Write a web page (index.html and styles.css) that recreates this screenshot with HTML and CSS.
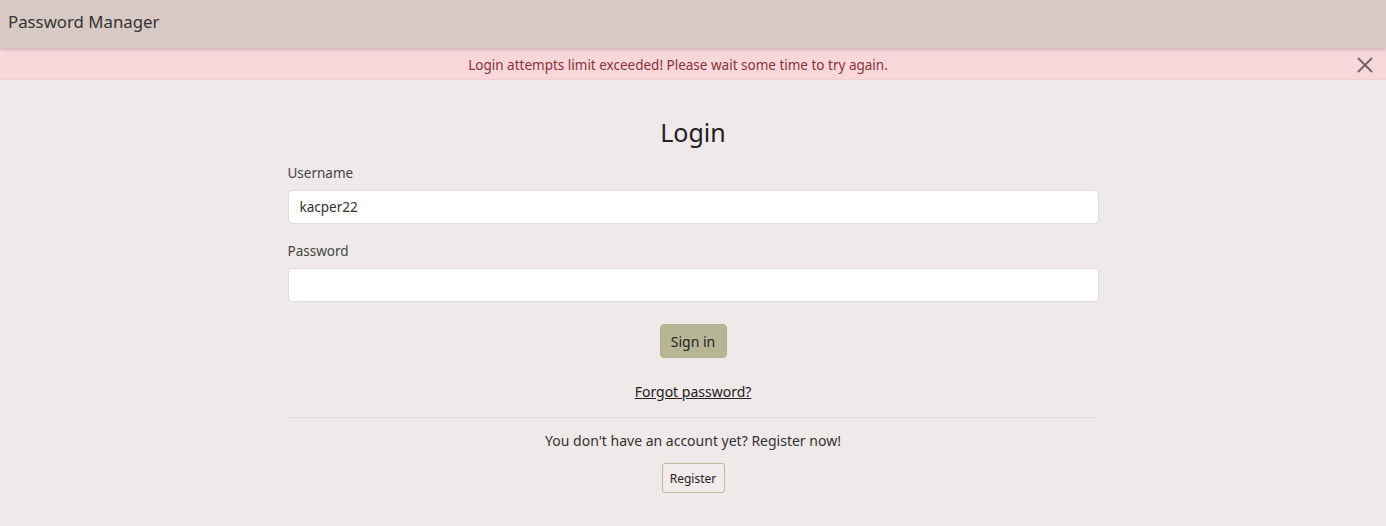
FILE: index.html
```html
<!DOCTYPE html>
<html>
<head>
<meta charset="utf-8">
<link rel="stylesheet" href="styles.css">
</head>
<body>
<nav class="navbar"><span class="brand">Password Manager</span></nav>
<div class="alert">
  <span class="alert-text">Login attempts limit exceeded! Please wait some time to try again.</span>
  <button class="close" aria-label="Close">
    <svg width="16" height="16" viewBox="0 0 16 16"><path d="M1 1L15 15M15 1L1 15" stroke="#6b6364" stroke-width="1.8" fill="none"/></svg>
  </button>
</div>
<main class="container">
  <h1 class="title">Login</h1>
  <div class="field">
    <label class="label">Username</label>
    <input class="input" type="text" value="kacper22">
  </div>
  <div class="field">
    <label class="label">Password</label>
    <input class="input" type="password">
  </div>
  <div class="center">
    <button class="btn-primary">Sign in</button>
  </div>
  <div class="center forgot"><a href="#" class="link">Forgot password?</a></div>
  <hr class="divider">
  <p class="register-text">You don't have an account yet? Register now!</p>
  <div class="center"><button class="btn-outline">Register</button></div>
</main>
</body>
</html>
```
FILE: styles.css
```css
* { box-sizing: border-box; }
html, body { margin: 0; padding: 0; }
body {
  background: #efe9e9;
  font-family: "Noto Sans", "Open Sans", sans-serif;
  color: #333;
  width: 1386px;
  height: 526px;
  overflow: hidden;
}
.navbar {
  height: 48px;
  background: #d8c9c5;
  display: flex;
  align-items: center;
  padding-left: 8px;
  padding-bottom: 5px;
  box-shadow: 0 2px 3px rgba(0,0,0,0.15);
  position: relative;
  z-index: 1;
}
.brand {
  font-size: 16.8px;
  color: #333;
}
.alert {
  height: 32px;
  background: #f8d7da;
  display: flex;
  align-items: center;
  justify-content: center;
  padding-right: 30px;
  padding-top: 3px;
  position: relative;
  border-bottom: 1px solid #f3cfd2;
}
.alert-text {
  font-size: 13.5px;
  color: #8a3238;
}
.close {
  position: absolute;
  right: 13px;
  top: 9px;
  background: none;
  border: 0;
  padding: 0;
  width: 16px;
  height: 16px;
  cursor: pointer;
}
.container {
  width: 811px;
  margin: 0 auto;
  padding-top: 36px;
}
.title {
  margin: 0 0 15px;
  text-align: center;
  font-weight: 400;
  font-size: 25px;
  line-height: 32px;
  color: #222;
}
.field { margin-bottom: 17px; }
.label {
  display: block;
  font-size: 13.5px;
  line-height: 20px;
  color: #444;
  margin-bottom: 7px;
}
.input {
  display: block;
  width: 100%;
  height: 34px;
  border: 1px solid #ddd;
  border-radius: 4px;
  background: #fff;
  padding: 0 11px;
  font-family: inherit;
  font-size: 13.5px;
  color: #333;
}
.center { display: flex; justify-content: center; }
.btn-primary {
  margin-top: 5px;
  width: 67px;
  height: 34px;
  background: #b6b695;
  border: 1px solid #b0b08f;
  border-radius: 4px;
  font-family: inherit;
  font-size: 14px;
  color: #222;
}
.forgot { margin-top: 24px; }
.link {
  color: #222;
  font-size: 14px;
  text-decoration: underline;
}
.divider {
  margin: 16px 0 0;
  border: 0;
  border-top: 1px solid #e3dcdc;
}
.register-text {
  margin: 13px 0 13px;
  text-align: center;
  font-size: 14px;
  color: #333;
}
.btn-outline {
  width: 63px;
  height: 30px;
  background: #f1ebeb;
  border: 1.5px solid #b9b99c;
  border-radius: 3px;
  font-family: inherit;
  font-size: 12px;
  color: #222;
}
```
